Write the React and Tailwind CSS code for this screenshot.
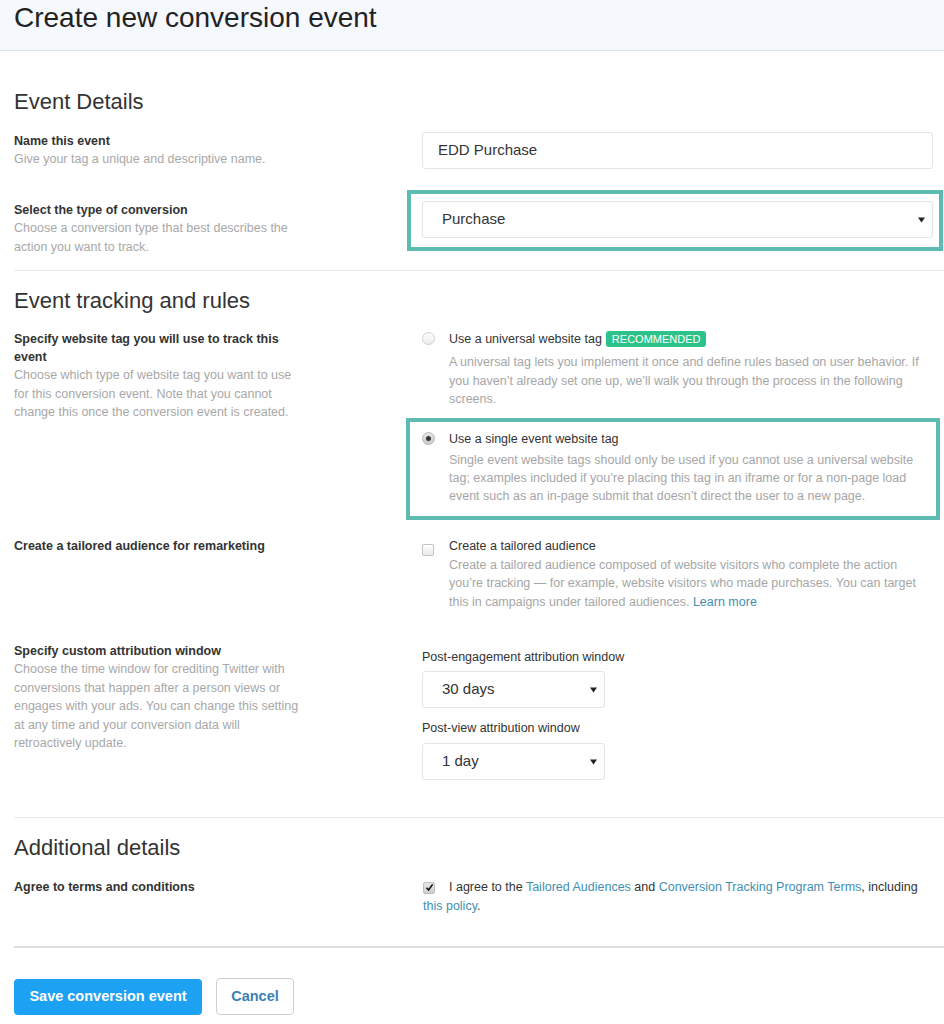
import React from "react";

function Radio({ checked }) {
  return (
    <span
      className={
        "mt-[1px] flex h-[13px] w-[13px] items-center justify-center rounded-full border " +
        (checked
          ? "border-[#b9b9b9] bg-gradient-to-b from-[#e4e4e4] to-[#c9c9c9]"
          : "border-[#cfcfcf] bg-gradient-to-b from-white to-[#ececec]")
      }
    >
      {checked && <span className="h-[5px] w-[5px] rounded-full bg-[#333]" />}
    </span>
  );
}

function Checkbox({ checked }) {
  return (
    <span
      className={
        "inline-flex h-[12px] w-[12px] items-center justify-center rounded-[2px] border align-[-1px] " +
        (checked
          ? "border-[#bdbdbd] bg-gradient-to-b from-[#e6e6e6] to-[#cfcfcf]"
          : "border-[#c4c4c4] bg-gradient-to-b from-white to-[#e9e9e9]")
      }
    >
      {checked && (
        <svg width="9" height="9" viewBox="0 0 9 9">
          <path d="M1.5 4.8 L3.6 7 L7.6 1.4" fill="none" stroke="#111" strokeWidth="1.6" />
        </svg>
      )}
    </span>
  );
}

function Arrow() {
  return (
    <svg width="7" height="6" viewBox="0 0 7 6" className="shrink-0">
      <path d="M0 0.5 H7 L3.5 5.5 Z" fill="#222" />
    </svg>
  );
}

function SelectBox({ value, className = "", textClass = "pl-[19px]" }) {
  return (
    <div
      className={
        "flex h-[37px] items-center justify-between rounded-[3px] border border-[#e4e4e4] bg-[#fefefe] pr-[7px] text-[15px] text-[#333] " +
        textClass +
        " " +
        className
      }
    >
      <span>{value}</span>
      <Arrow />
    </div>
  );
}

function Row({ title, desc, children, className = "" }) {
  return (
    <div className={"grid grid-cols-[408px_511px] " + className}>
      <div className="w-[292px]">
        <div className="text-[12.5px] font-bold leading-[18px] text-[#333]">{title}</div>
        {desc && <div className="text-[12.5px] leading-[18.5px] text-[#a8a8a8]">{desc}</div>}
      </div>
      <div>{children}</div>
    </div>
  );
}

const link = "text-[#3f8fb5]";

export default function App() {
  return (
    <div className="min-h-screen bg-white font-['Liberation_Sans',Arial,sans-serif] text-[#333]">
      <header className="h-[51px] border-b border-[#dcdfe4] bg-[#f5f8fd] pl-[14px]">
        <h1 className="text-[28px] leading-[36px] text-[#222]">Create new conversion event</h1>
      </header>

      <main className="pl-[14px]">
        <h2 className="mt-[38px] text-[22px] leading-[26px] text-[#333]">Event Details</h2>

        <Row title="Name this event" desc="Give your tag a unique and descriptive name." className="mt-[17px]">
          <div className="flex h-[37px] items-center rounded-[3px] border border-[#e4e4e4] pl-[15px] text-[15px] text-[#333]">
            EDD Purchase
          </div>
        </Row>

        <Row
          title="Select the type of conversion"
          desc="Choose a conversion type that best describes the action you want to track."
          className="mt-[32px]"
        >
          <div className="-ml-[15px] -mr-[10px] -mt-[11px] border-4 border-[#5dbbb2] pb-[9px] pl-[11px] pr-[6px] pt-[7px]">
            <SelectBox value="Purchase" />
          </div>
        </Row>

        <div className="mt-[14px] h-px bg-[#e9e9e9]" />

        <h2 className="mt-[17px] text-[22px] leading-[26px] text-[#333]">Event tracking and rules</h2>

        <Row
          title="Specify website tag you will use to track this event"
          desc="Choose which type of website tag you want to use for this conversion event. Note that you cannot change this once the conversion event is created."
          className="mt-[16px]"
        >
          <div className="flex">
            <div className="w-[27px] shrink-0 pt-[1px]">
              <Radio />
            </div>
            <div className="w-[474px] text-[12.5px]">
              <div className="flex h-[18px] items-center gap-[4px] text-[#333]">
                <span>Use a universal website tag</span>
                <span className="rounded-[3px] bg-[#2cc38b] px-[6px] text-[11px] leading-[16px] text-white">
                  RECOMMENDED
                </span>
              </div>
              <p className="mt-[5px] leading-[18.5px] text-[#a6a6a6]">
                A universal tag lets you implement it once and define rules based on user behavior. If you haven’t
                already set one up, we’ll walk you through the process in the following screens.
              </p>
            </div>
          </div>

          <div className="-ml-[16px] -mr-[7px] mt-[9px] flex border-4 border-[#5dbbb2] pb-[11px] pl-[12px] pr-[3px] pt-[8px]">
            <div className="w-[27px] shrink-0 pt-[1px]">
              <Radio checked />
            </div>
            <div className="w-[474px] text-[12.5px]">
              <div className="leading-[18px] text-[#333]">Use a single event website tag</div>
              <p className="mt-[3px] leading-[18px] text-[#a6a6a6]">
                Single event website tags should only be used if you cannot use a universal website tag; examples
                included if you’re placing this tag in an iframe or for a non-page load event such as an in-page submit
                that doesn’t direct the user to a new page.
              </p>
            </div>
          </div>
        </Row>

        <Row title="Create a tailored audience for remarketing" className="mt-[17px]">
          <div className="flex">
            <div className="w-[27px] shrink-0 pt-[1px]">
              <Checkbox />
            </div>
            <div className="w-[474px] text-[12.5px]">
              <div className="leading-[18px] text-[#333]">Create a tailored audience</div>
              <p className="mt-[1px] leading-[18.5px] text-[#a6a6a6]">
                Create a tailored audience composed of website visitors who complete the action you’re tracking — for
                example, website visitors who made purchases. You can target this in campaigns under tailored
                audiences. <span className={link}>Learn more</span>
              </p>
            </div>
          </div>
        </Row>

        <Row
          title="Specify custom attribution window"
          desc="Choose the time window for crediting Twitter with conversions that happen after a person views or engages with your ads. You can change this setting at any time and your conversion data will retroactively update."
          className="mt-[31px]"
        >
          <div className="pt-[6px] text-[12.5px]">
            <div className="leading-[18px] text-[#333]">Post-engagement attribution window</div>
            <SelectBox value="30 days" className="mt-[5px] w-[183px]" />
            <div className="mt-[11px] leading-[18px] text-[#333]">Post-view attribution window</div>
            <SelectBox value="1 day" className="mt-[6px] w-[183px]" />
          </div>
        </Row>

        <div className="mt-[37px] h-px bg-[#e9e9e9]" />

        <h2 className="mt-[17px] text-[22px] leading-[26px] text-[#333]">Additional details</h2>

        <Row title="Agree to terms and conditions" className="mt-[17px]">
          <p className="pl-[1px] text-[12.5px] leading-[19px] text-[#333]">
            <Checkbox checked />
            <span className="ml-[14px]">I agree to the </span>
            <span className={link}>Tailored Audiences</span> and{" "}
            <span className={link}>Conversion Tracking Program Terms</span>, including{" "}
            <span className={link}>this policy</span>.
          </p>
        </Row>

        <div className="mt-[30px] h-[2px] bg-[#dddddd]" />

        <div className="mt-[30px] flex items-center gap-[14px]">
          <button className="h-[36px] w-[188px] rounded-[4px] bg-[#1da1f2] text-[14.5px] font-bold text-white">
            Save conversion event
          </button>
          <button className="h-[37px] w-[78px] rounded-[4px] border border-[#cfcfcf] bg-white text-[14.5px] font-bold text-[#3d7fb3]">
            Cancel
          </button>
        </div>
      </main>
    </div>
  );
}
